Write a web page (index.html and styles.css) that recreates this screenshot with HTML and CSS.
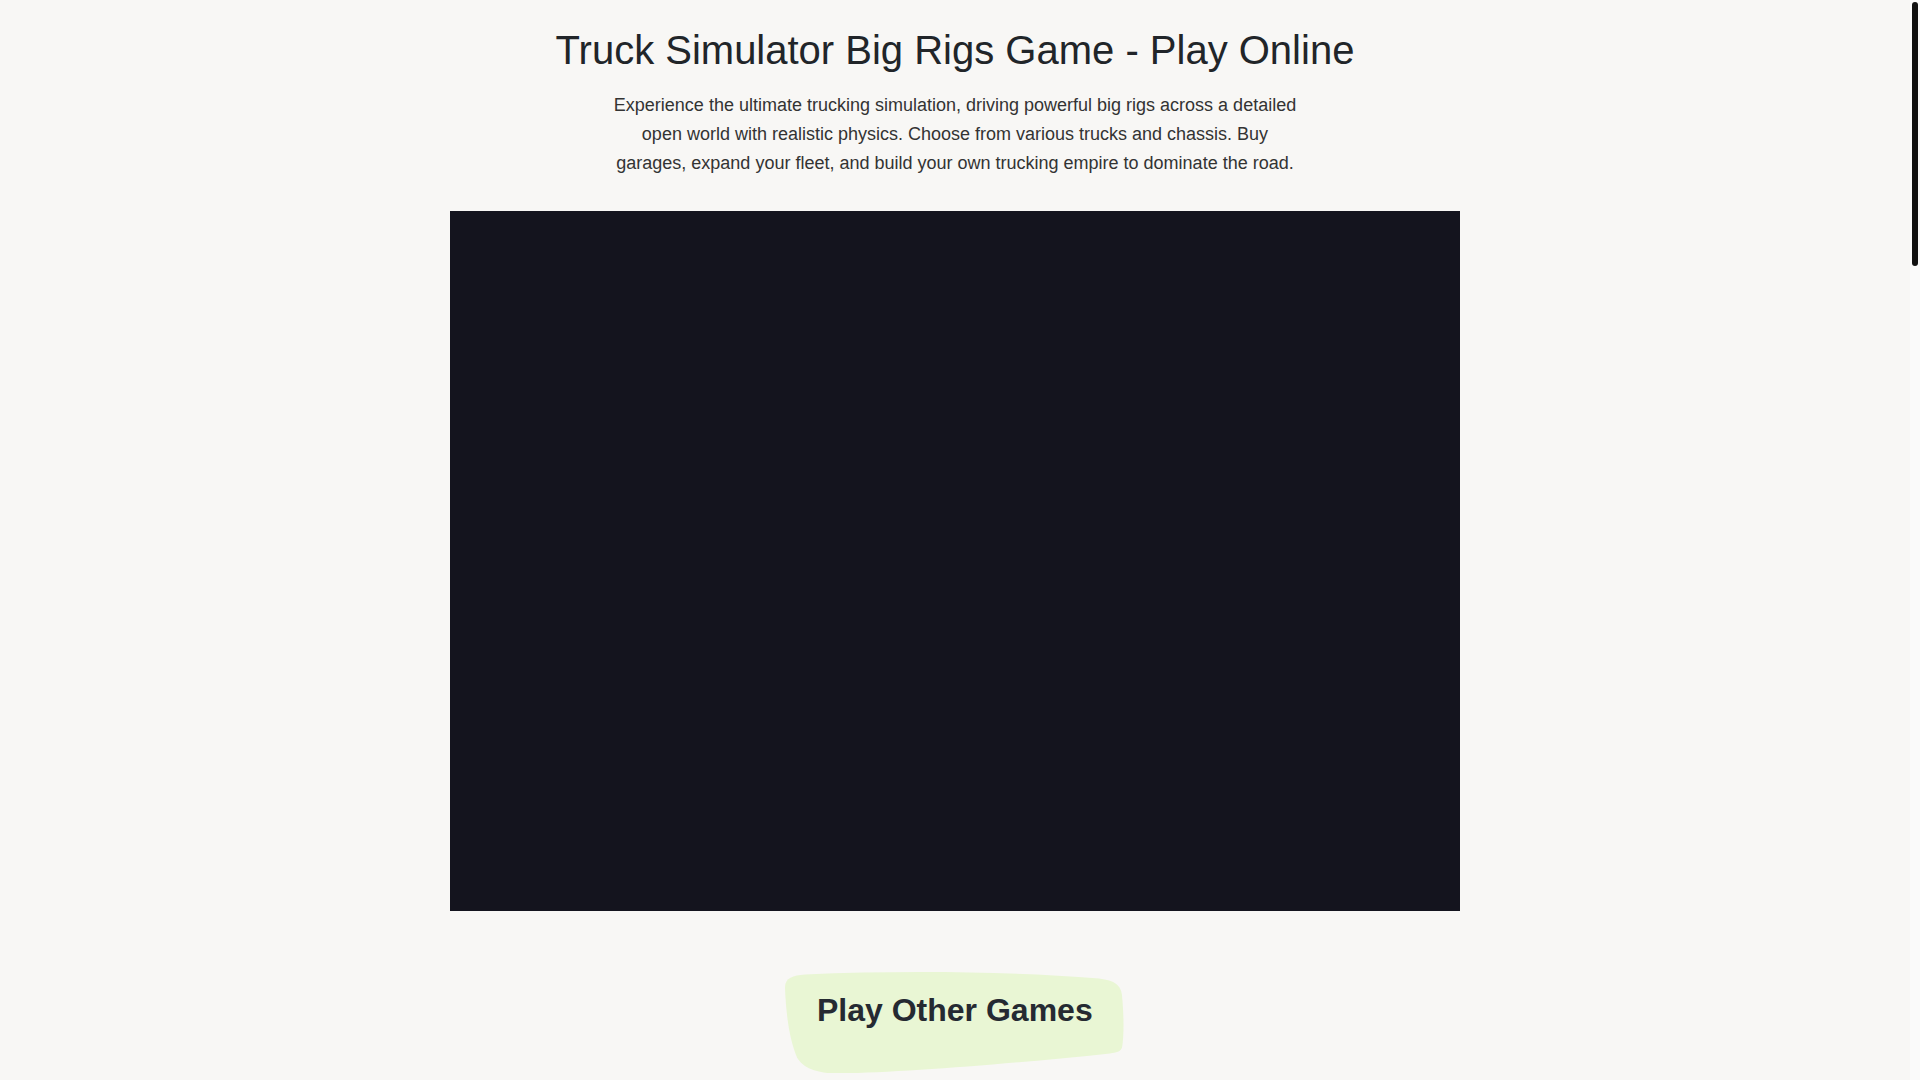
FILE: index.html
```html
<!DOCTYPE html>
<html lang="en">
<head>
<meta charset="utf-8">
<title>Truck Simulator Big Rigs Game - Play Online</title>
<link rel="stylesheet" href="styles.css">
</head>
<body>
<main class="page">
  <header class="intro">
    <h1 class="title">Truck Simulator Big Rigs Game - Play Online</h1>
    <p class="lead">Experience the ultimate trucking simulation, driving powerful big rigs across a detailed open world with realistic physics. Choose from various trucks and chassis. Buy garages, expand your fleet, and build your own trucking empire to dominate the road.</p>
  </header>
  <section class="game-frame" aria-label="Game"></section>
  <section class="more">
    <h2 class="more-title">Play Other Games</h2>
    <div class="games-list"></div>
  </section>
</main>
<div class="scrollbar" aria-hidden="true"><div class="scrollbar-thumb"></div></div>
</body>
</html>
```

FILE: styles.css
```css
html {
  background: #f8f7f5;
  scrollbar-width: none;
}

body {
  margin: 0;
  background: #f8f7f5;
  font-family: "Liberation Sans", Arial, sans-serif;
}

.page {
  display: flex;
  flex-direction: column;
  align-items: center;
  padding-top: 26px;
  margin-right: 10px;
}

.intro {
  display: flex;
  flex-direction: column;
  align-items: center;
}

.title {
  margin: 0;
  font-size: 40px;
  line-height: 48px;
  font-weight: 400;
  color: #212529;
  text-align: center;
}

.lead {
  margin: 17px 0 0;
  max-width: 700px;
  font-size: 18px;
  line-height: 1.6;
  color: #333333;
  text-align: center;
}

.game-frame {
  margin-top: 34px;
  width: 1010px;
  height: 700px;
  background: #14141e;
}

.more {
  display: flex;
  flex-direction: column;
  align-items: center;
  margin-top: 60px;
}

.more-title {
  margin: 0;
  width: 276px;
  padding: 20px 32px 44px;
  font-size: 32px;
  line-height: 38px;
  font-weight: 700;
  color: #252a32;
  background: #e9f6d4;
  white-space: nowrap;
  clip-path: path("M 0 16 C 0 6, 8 4, 20 3 C 120 -1, 220 0, 314 7 C 330 9, 336 14, 337 24 C 339 45, 339 65, 337 76 C 336 80, 331 81, 325 82 C 230 92, 120 101, 55 102 C 30 102, 18 96, 12 86 C 5 70, 1 45, 0 16 Z");
}

.games-list {
  width: 1010px;
  min-height: 3260px;
}

/* scrollbar indicator */
.scrollbar {
  position: fixed;
  top: 0;
  right: 0;
  width: 10px;
  height: 100vh;
  background: #fafafa;
}

.scrollbar-thumb {
  margin: 2px 2px 0;
  width: 6px;
  height: 264px;
  border-radius: 3px;
  background: #111111;
}
```
